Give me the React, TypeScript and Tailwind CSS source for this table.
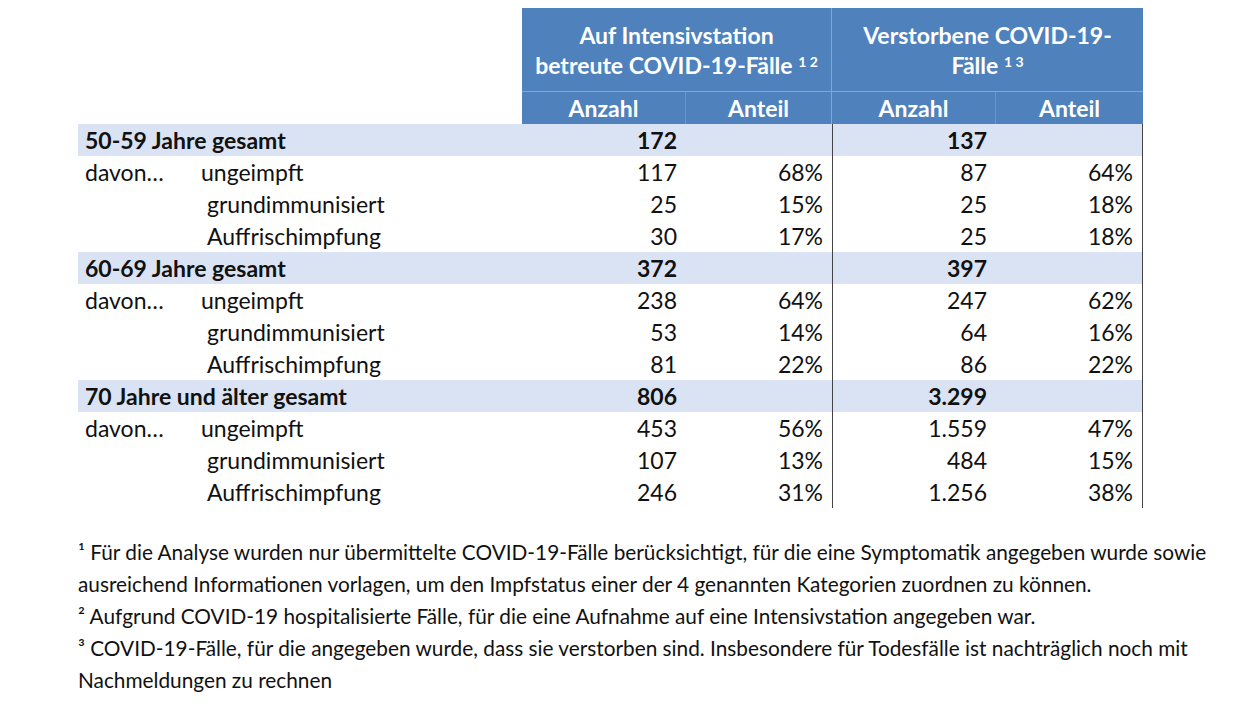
import React from 'react';

const groups = [
    {
        label: '50-59 Jahre gesamt',
        icu: '172',
        died: '137',
        rows: [
            ['ungeimpft', '117', '68%', '87', '64%'],
            ['grundimmunisiert', '25', '15%', '25', '18%'],
            ['Auffrischimpfung', '30', '17%', '25', '18%'],
        ],
    },
    {
        label: '60-69 Jahre gesamt',
        icu: '372',
        died: '397',
        rows: [
            ['ungeimpft', '238', '64%', '247', '62%'],
            ['grundimmunisiert', '53', '14%', '64', '16%'],
            ['Auffrischimpfung', '81', '22%', '86', '22%'],
        ],
    },
    {
        label: '70 Jahre und älter gesamt',
        icu: '806',
        died: '3.299',
        rows: [
            ['ungeimpft', '453', '56%', '1.559', '47%'],
            ['grundimmunisiert', '107', '13%', '484', '15%'],
            ['Auffrischimpfung', '246', '31%', '1.256', '38%'],
        ],
    },
];

export default function App() {
    return (
        <div className="w-[1243px] h-[726px] bg-white text-[#111] pl-[78px] pt-[8px] font-['Lato',sans-serif]">
            {/* Table */}
            <div className="grid grid-cols-[444px_164px_146px_164px_147px] w-[1065px] text-[23px]">
                {/* Header row 1 */}
                <div className="h-[84px]" />
                <div className="col-span-2 h-[84px] bg-[#4F81BD] text-white font-bold flex items-center justify-center text-center leading-[30px] border-r border-[#86a6d2] border-b">
                    <span>
                        Auf Intensivstation
                        <br />
                        betreute COVID-19-Fälle <sup className="text-[14px]">1 2</sup>
                    </span>
                </div>
                <div className="col-span-2 h-[84px] bg-[#4F81BD] text-white font-bold flex items-center justify-center text-center leading-[30px] border-b border-[#86a6d2]">
                    <span>
                        Verstorbene COVID-19-
                        <br />
                        Fälle <sup className="text-[14px]">1 3</sup>
                    </span>
                </div>

                {/* Header row 2 */}
                <div className="h-[32px]" />
                <div className="h-[32px] bg-[#4F81BD] text-white font-bold flex items-center justify-center border-r border-[#6f93c6]">Anzahl</div>
                <div className="h-[32px] bg-[#4F81BD] text-white font-bold flex items-center justify-center border-r border-[#86a6d2]">Anteil</div>
                <div className="h-[32px] bg-[#4F81BD] text-white font-bold flex items-center justify-center border-r border-[#6f93c6]">Anzahl</div>
                <div className="h-[32px] bg-[#4F81BD] text-white font-bold flex items-center justify-center">Anteil</div>

                {/* Body */}
                {groups.map((g) => (
                    <React.Fragment key={g.label}>
                        <div className="h-[32px] bg-[#DAE3F3] font-bold flex items-center pl-[7px]">{g.label}</div>
                        <div className="h-[32px] bg-[#DAE3F3] font-bold flex items-center justify-end pr-[9px]">{g.icu}</div>
                        <div className="h-[32px] bg-[#DAE3F3]" />
                        <div className="h-[32px] bg-[#DAE3F3] font-bold flex items-center justify-end pr-[9px] border-l border-[#444]">{g.died}</div>
                        <div className="h-[32px] bg-[#DAE3F3] border-r border-[#444]" />

                        {g.rows.map((r, i) => (
                            <React.Fragment key={r[0]}>
                                <div className="h-[32px] flex items-center pl-[7px]">
                                    {i === 0 ? (
                                        <>
                                            <span className="w-[116px]">davon…</span>
                                            <span>{r[0]}</span>
                                        </>
                                    ) : (
                                        <span className="pl-[122px]">{r[0]}</span>
                                    )}
                                </div>
                                <div className="h-[32px] flex items-center justify-end pr-[9px]">{r[1]}</div>
                                <div className="h-[32px] flex items-center justify-end pr-[9px]">{r[2]}</div>
                                <div className="h-[32px] flex items-center justify-end pr-[9px] border-l border-[#444]">{r[3]}</div>
                                <div className="h-[32px] flex items-center justify-end pr-[9px] border-r border-[#444]">{r[4]}</div>
                            </React.Fragment>
                        ))}
                    </React.Fragment>
                ))}
            </div>

            {/* Footnotes */}
            <div className="mt-[28px] text-[20.8px] leading-[32px] whitespace-nowrap">
                <p>¹ Für die Analyse wurden nur übermittelte COVID-19-Fälle berücksichtigt, für die eine Symptomatik angegeben wurde sowie</p>
                <p>ausreichend Informationen vorlagen, um den Impfstatus einer der 4 genannten Kategorien zuordnen zu können.</p>
                <p>² Aufgrund COVID-19 hospitalisierte Fälle, für die eine Aufnahme auf eine Intensivstation angegeben war.</p>
                <p>³ COVID-19-Fälle, für die angegeben wurde, dass sie verstorben sind. Insbesondere für Todesfälle ist nachträglich noch mit</p>
                <p>Nachmeldungen zu rechnen</p>
            </div>
        </div>
    );
}
